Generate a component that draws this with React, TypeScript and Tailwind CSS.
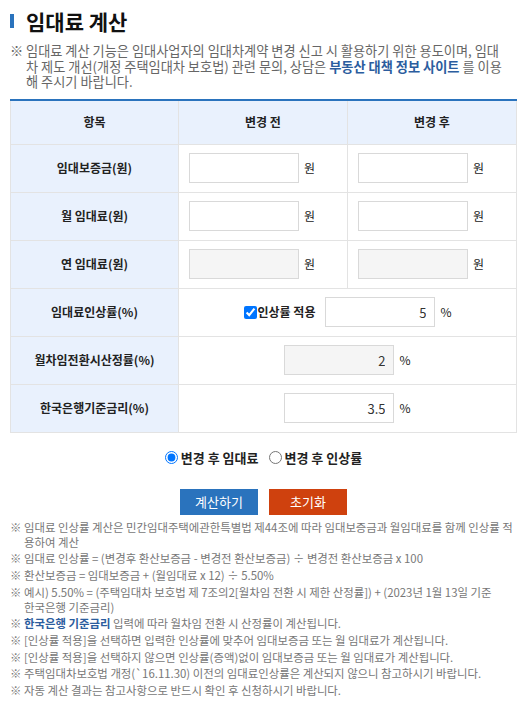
import { useState } from "react"

type Row = {
  label: string
  readOnly?: boolean
}

const moneyRows: Row[] = [
  { label: "임대보증금(원)" },
  { label: "월 임대료(원)" },
  { label: "연 임대료(원)", readOnly: true },
]

const notes: { text: React.ReactNode; keep?: boolean }[] = [
  { text: "임대료 인상률 계산은 민간임대주택에관한특별법 제44조에 따라 임대보증금과 월임대료를 함께 인상률 적용하여 계산" },
  { text: "임대료 인상률 = (변경후 환산보증금 - 변경전 환산보증금) ÷ 변경전 환산보증금 x 100" },
  { text: "환산보증금 = 임대보증금 + (월임대료 x 12) ÷ 5.50%" },
  {
    text: "예시) 5.50% = (주택임대차 보호법 제 7조의2[월차임 전환 시 제한 산정률]) + (2023년 1월 13일 기준 한국은행 기준금리)",
    keep: true,
  },
  {
    text: (
      <>
        <b className="font-bold text-[#2b5d9e]">한국은행 기준금리</b> 입력에 따라 월차임 전환 시 산정률이 계산됩니다.
      </>
    ),
  },
  { text: "[인상률 적용]을 선택하면 입력한 인상률에 맞추어 임대보증금 또는 월 임대료가 계산됩니다." },
  { text: "[인상률 적용]을 선택하지 않으면 인상률(증액)없이 임대보증금 또는 월 임대료가 계산됩니다." },
  { text: "주택임대차보호법 개정(`16.11.30) 이전의 임대료인상률은 계산되지 않으니 참고하시기 바랍니다." },
  { text: "자동 계산 결과는 참고사항으로 반드시 확인 후 신청하시기 바랍니다." },
]

function Field({ value, readOnly, unit }: { value?: string; readOnly?: boolean; unit: string }) {
  return (
    <span className="inline-flex items-center">
      <input
        type="text"
        defaultValue={value}
        readOnly={readOnly}
        className={`h-[30px] w-[110px] border border-[#d9d9d9] px-2 text-right text-[13px] text-[#333] outline-none ${
          readOnly ? "bg-[#f5f5f5]" : "bg-white"
        }`}
      />
      <span className="ml-[5px] text-[12px] text-[#222]">{unit}</span>
    </span>
  )
}

export default function App() {
  const [applyRate, setApplyRate] = useState(true)
  const [mode, setMode] = useState("rent")

  return (
    <div className="min-h-[725px] w-[529px] bg-white pb-4 pl-[10px] pr-[12px] pt-[9px] font-['Malgun_Gothic','Noto_Sans_CJK_KR',sans-serif] text-[#333]">
      {/* Title */}
      <h2 className="flex items-center gap-[12px] text-[21px] font-bold leading-[24px] text-[#111]">
        <span className="h-[14px] w-[4px] bg-[#2a73bd]" />
        임대료 계산
      </h2>

      {/* Notice */}
      <div className="mt-[10px] flex text-[13.2px] leading-[15.7px] text-[#666]">
        <span className="w-[16px] shrink-0">※</span>
        <p>
          <span className="block whitespace-nowrap">
            임대료 계산 기능은 임대사업자의 임대차계약 변경 신고 시 활용하기 위한 용도이며, 임대
          </span>
          <span className="block whitespace-nowrap">
            차 제도 개선(개정 주택임대차 보호법) 관련 문의, 상담은{" "}
            <b className="font-bold text-[#2b5d9e]">부동산 대책 정보 사이트</b> 를 이용
          </span>
          <span className="block whitespace-nowrap">해 주시기 바랍니다.</span>
        </p>
      </div>

      {/* Table */}
      <table className="mt-[9px] w-full table-fixed border-collapse border-t-2 border-t-[#2a73bd] text-[12px]">
        <colgroup>
          <col className="w-[168px]" />
          <col className="w-[169px]" />
          <col />
        </colgroup>
        <thead>
          <tr className="h-[44px] bg-[#e9f1fd]">
            <th className="border border-t-0 border-[#e3e3e3] font-bold text-[#222]">항목</th>
            <th className="border border-t-0 border-[#e3e3e3] font-bold text-[#222]">변경 전</th>
            <th className="border border-t-0 border-[#e3e3e3] font-bold text-[#222]">변경 후</th>
          </tr>
        </thead>
        <tbody>
          {moneyRows.map((row) => (
            <tr key={row.label} className="h-[48px]">
              <th className="border border-[#e3e3e3] bg-[#e9f1fd] font-bold text-[#222]">{row.label}</th>
              <td className="border border-[#e3e3e3] pl-[10px]">
                <Field readOnly={row.readOnly} unit="원" />
              </td>
              <td className="border border-[#e3e3e3] pl-[10px]">
                <Field readOnly={row.readOnly} unit="원" />
              </td>
            </tr>
          ))}
          <tr className="h-[48px]">
            <th className="border border-[#e3e3e3] bg-[#e9f1fd] font-bold text-[#222]">임대료인상률(%)</th>
            <td colSpan={2} className="border border-[#e3e3e3] text-center">
              <span className="inline-flex items-center">
                <label className="mr-[10px] inline-flex items-center text-[12px] font-bold text-[#222]">
                  <input
                    type="checkbox"
                    checked={applyRate}
                    onChange={(e) => setApplyRate(e.target.checked)}
                    className="mr-[1px] h-[13px] w-[13px] accent-[#0075ff]"
                  />
                  인상률 적용
                </label>
                <Field value="5" unit="%" />
              </span>
            </td>
          </tr>
          <tr className="h-[48px]">
            <th className="border border-[#e3e3e3] bg-[#e9f1fd] font-bold text-[#222]">월차임전환시산정률(%)</th>
            <td colSpan={2} className="border border-[#e3e3e3] text-center">
              <Field value="2" readOnly unit="%" />
            </td>
          </tr>
          <tr className="h-[48px]">
            <th className="border border-[#e3e3e3] bg-[#e9f1fd] font-bold text-[#222]">한국은행기준금리(%)</th>
            <td colSpan={2} className="border border-[#e3e3e3] text-center">
              <Field value="3.5" unit="%" />
            </td>
          </tr>
        </tbody>
      </table>

      {/* Mode radios */}
      <div className="mt-[15px] flex items-center justify-center gap-[10px] text-[13px] font-bold leading-[20px] text-[#222]">
        <label className="inline-flex items-center gap-[3px]">
          <input
            type="radio"
            name="mode"
            checked={mode === "rent"}
            onChange={() => setMode("rent")}
            className="h-[13px] w-[13px] accent-[#0075ff]"
          />
          변경 후 임대료
        </label>
        <label className="inline-flex items-center gap-[3px]">
          <input
            type="radio"
            name="mode"
            checked={mode === "rate"}
            onChange={() => setMode("rate")}
            className="h-[13px] w-[13px] accent-[#0075ff]"
          />
          변경 후 인상률
        </label>
      </div>

      {/* Buttons */}
      <div className="mt-[21px] flex justify-center gap-[11px]">
        <button className="h-[26px] w-[78px] bg-[#2a73bd] text-[13px] text-white">계산하기</button>
        <button className="h-[26px] w-[78px] bg-[#cf410e] text-[13px] text-white">초기화</button>
      </div>

      {/* Notes */}
      <ul className="mr-[2px] mt-[5px] text-[11.4px] leading-[15px] text-[#777]">
        {notes.map((note, i) => (
          <li key={i} className="mb-[1.7px] flex">
            <span className="w-[14px] shrink-0">※</span>
            <span className={note.keep ? "break-keep" : ""}>{note.text}</span>
          </li>
        ))}
      </ul>
    </div>
  )
}
